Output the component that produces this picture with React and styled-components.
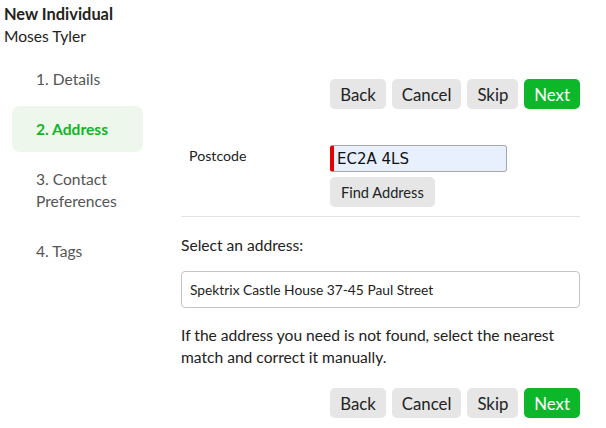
import styled, { createGlobalStyle } from "styled-components";

const Global = createGlobalStyle`
  body {
    margin: 0;
    background: #fff;
    font-family: Lato, "Liberation Sans", sans-serif;
    color: #222;
  }
`;

const Page = styled.div`
  width: 606px;
  height: 428px;
  overflow: hidden;
`;

const Header = styled.div`
  padding: 4px 0 0 4px;
`;

const Title = styled.div`
  font-weight: 700;
  font-size: 16.4px;
  line-height: 20px;
`;

const Subtitle = styled.div`
  font-size: 15.6px;
  line-height: 24px;
`;

const Body = styled.div`
  display: flex;
  margin-top: 8px;
`;

const Sidebar = styled.div`
  width: 131px;
  margin-left: 12px;
  margin-right: 38px;
  display: flex;
  flex-direction: column;
  gap: 4px;
`;

const Step = styled.div`
  padding: 12px 10px 12px 24px;
  font-size: 15.6px;
  line-height: 22px;
  border-radius: 8px;
  color: ${(p) => (p.active ? "#12b52a" : "#555")};
  background: ${(p) => (p.active ? "#edf7ec" : "transparent")};
  font-weight: ${(p) => (p.active ? 700 : 400)};
`;

const Main = styled.div`
  width: 399px;
  padding-top: 23px;
`;

const ButtonRow = styled.div`
  display: flex;
  justify-content: flex-end;
  gap: 6px;
`;

const Button = styled.button`
  height: 30px;
  padding: 0 10px;
  border: none;
  border-radius: 5px;
  font-family: inherit;
  font-size: 16.8px;
  color: ${(p) => (p.primary ? "#fff" : "#222")};
  background: ${(p) => (p.primary ? "#0cb82a" : "#e6e6e6")};
`;

const FieldRow = styled.div`
  display: flex;
  margin-top: 36px;
`;

const FieldLabel = styled.div`
  width: 141px;
  padding-left: 8px;
  padding-top: 1px;
  font-size: 14.2px;
  line-height: 20px;
`;

const FieldControls = styled.div`
  display: flex;
  flex-direction: column;
  align-items: flex-start;
  gap: 5px;
`;

const Input = styled.input`
  box-sizing: border-box;
  width: 177px;
  height: 27px;
  padding: 0 3px;
  border: 1px solid #a9a9a9;
  border-left: 4px solid #e40000;
  border-radius: 3px;
  background: #e8f0fe;
  font-family: "DejaVu Sans", sans-serif;
  font-size: 15px;
  color: #111;
  outline: none;
`;

const SmallButton = styled(Button)`
  height: 30px;
  font-size: 14.6px;
  padding: 0 11px;
`;

const Divider = styled.hr`
  border: none;
  border-top: 1px solid #e2e2e2;
  margin: 9px 0 0;
`;

const SectionLabel = styled.div`
  margin-top: 17px;
  font-size: 15.6px;
  line-height: 22px;
`;

const Select = styled.div`
  box-sizing: border-box;
  margin-top: 15px;
  height: 37px;
  padding: 0 8px;
  display: flex;
  align-items: center;
  border: 1px solid #c4c4c4;
  border-radius: 4px;
  font-size: 13.8px;
`;

const Hint = styled.p`
  margin: 16px 0 20px;
  font-size: 15.6px;
  line-height: 22px;
`;

const Actions = () => (
  <ButtonRow>
    <Button>Back</Button>
    <Button>Cancel</Button>
    <Button>Skip</Button>
    <Button primary>Next</Button>
  </ButtonRow>
);

export default function App() {
  return (
    <Page>
      <Global />
      <Header>
        <Title>New Individual</Title>
        <Subtitle>Moses Tyler</Subtitle>
      </Header>
      <Body>
        <Sidebar>
          <Step>1. Details</Step>
          <Step active>2. Address</Step>
          <Step>3. Contact Preferences</Step>
          <Step>4. Tags</Step>
        </Sidebar>
        <Main>
          <Actions />
          <FieldRow>
            <FieldLabel>Postcode</FieldLabel>
            <FieldControls>
              <Input defaultValue="EC2A 4LS" />
              <SmallButton>Find Address</SmallButton>
            </FieldControls>
          </FieldRow>
          <Divider />
          <SectionLabel>Select an address:</SectionLabel>
          <Select>Spektrix Castle House 37-45 Paul Street</Select>
          <Hint>
            If the address you need is not found, select the nearest match and correct it manually.
          </Hint>
          <Actions />
        </Main>
      </Body>
    </Page>
  );
}
